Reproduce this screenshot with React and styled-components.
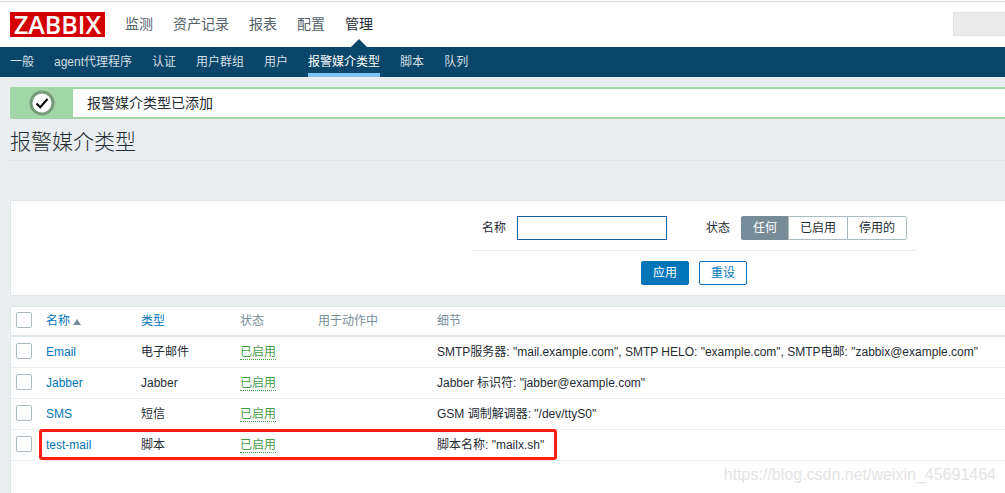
import React from "react";
import styled, { createGlobalStyle } from "styled-components";

const GlobalStyle = createGlobalStyle`
  * { box-sizing: border-box; }
  body {
    margin: 0;
    background: #ebeef0;
    color: #1f2c33;
    font: 12px/16px "Liberation Sans", "Noto Sans CJK SC", sans-serif;
    overflow-x: hidden;
  }
  input, button { font: inherit; }
  a { text-decoration: none; }
`;

const Page = styled.div`
  display: flex;
  flex-direction: column;
  min-height: 100vh;
  position: relative;
`;

const TopBar = styled.header`
  display: flex;
  align-items: center;
  height: 47px;
  padding-left: 10px;
  border-top: 1px solid #fff;
  background: #fff;
  box-shadow: inset 0 1px 0 #dcdcdc;
`;

const Logo = styled.a`
  width: 95px;
  height: 25px;
  background: #d40000;
  color: #fff;
  font-family: "Open Sans", "Liberation Sans", sans-serif;
  font-size: 25px;
  font-weight: 600;
  line-height: 25px;
  text-align: center;
`;

const MainNav = styled.nav`
  display: flex;
  align-self: stretch;
  gap: 20px;
  padding-left: 20px;
`;

const MainLink = styled.a`
  position: relative;
  font-size: 14px;
  line-height: 46px;
  color: ${(p) => (p.$active ? "#1f2c33" : "#52616a")};

  &::after {
    content: "";
    display: ${(p) => (p.$active ? "block" : "none")};
    position: absolute;
    bottom: 0;
    left: 50%;
    margin-left: -8px;
    border: 8px solid transparent;
    border-top: 0;
    border-bottom-color: #0a466a;
  }
`;

const Search = styled.input`
  width: 52px;
  height: 24px;
  margin-left: auto;
  border: 1px solid #e2e2e2;
  border-right: 0;
  background: #ebebeb;
`;

const SubNav = styled.nav`
  display: flex;
  gap: 20px;
  height: 30px;
  padding: 0 10px;
  background: #0a466a;
`;

const SubLink = styled.a`
  height: 30px;
  line-height: 30px;
  color: ${(p) => (p.$active ? "#fff" : "#d3dfe6")};
  box-shadow: ${(p) => (p.$active ? "inset 0 -4px 0 #7dc5f5" : "none")};
`;

const Content = styled.main`
  display: flex;
  flex-direction: column;
  flex: 1;
  padding: 10px 0 0 10px;
`;

const Message = styled.output`
  display: flex;
  height: 32px;
  border: 2px solid #a3d6a7;
  border-width: 2px 0;
  border-radius: 2px 0 0 2px;
  background: #fff;
  font-size: 14px;
  line-height: 28px;
`;

const MessageMark = styled.span`
  display: flex;
  align-items: center;
  justify-content: center;
  width: 63px;
  margin-right: 14px;
  background: #a3d6a7;
`;

const Title = styled.h1`
  margin: 0;
  height: 42px;
  border-bottom: 1px solid #dfe4e7;
  font-size: 21px;
  font-weight: 300;
  line-height: 46px;
`;

const FilterPanel = styled.section`
  display: flex;
  justify-content: flex-end;
  margin-top: 39px;
  padding: 15px 89px 10px 10px;
  border: 1px solid #dfe4e7;
  border-right: 0;
  background: #fff;
`;

const FilterFields = styled.div`
  display: flex;
  gap: 39px;
  padding: 0 9px 10px 10px;
  border-bottom: 1px solid #ebebeb;
`;

const Field = styled.div`
  display: flex;
  align-items: center;
  gap: 11px;
`;

const TextInput = styled.input`
  width: 150px;
  height: 24px;
  border: 1px solid #0a5f96;
  background: #fff;
`;

const Segments = styled.div`
  display: flex;
  height: 24px;
`;

const Segment = styled.label`
  padding: 0 11px;
  margin-left: -1px;
  border: 1px solid #acbbc2;
  background: #fff;
  line-height: 22px;

  &:first-child { margin-left: 0; border-radius: 2px 0 0 2px; }
  &:last-child { border-radius: 0 2px 2px 0; }
  &:has(input:checked) {
    background: #768d99;
    border-color: #768d99;
    color: #fff;
  }
  input {
    position: absolute;
    appearance: none;
    margin: 0;
    width: 0;
    height: 0;
  }
`;

const Actions = styled.div`
  display: flex;
  justify-content: center;
  gap: 10px;
  padding-top: 10px;
`;

const Button = styled.button`
  width: 48px;
  height: 24px;
  padding: 0;
  border: 1px solid #0275b8;
  border-radius: 2px;
  background: ${(p) => (p.$primary ? "#0275b8" : "#fff")};
  color: ${(p) => (p.$primary ? "#fff" : "#0275b8")};
  line-height: 22px;
`;

const TablePanel = styled.section`
  flex: 1;
  margin-top: 10px;
  border: 1px solid #dfe4e7;
  border-width: 1px 0 0 1px;
  background: #fff;
`;

const Table = styled.table`
  width: 100%;
  table-layout: fixed;
  border-collapse: separate;
  border-spacing: 0;
`;

const Col = styled.col`
  width: ${(p) => p.$w || "auto"};
`;

const Head = styled.th`
  height: 30px;
  padding: 0 5px;
  border-bottom: 2px solid #dfe4e7;
  color: #768d99;
  font-weight: 400;
  text-align: left;
`;

const Cell = styled.td`
  position: relative;
  height: 31px;
  padding: 0 5px;
  border-bottom: 1px solid #ebeef0;
  white-space: nowrap;
`;

const Link = styled.a`
  color: #0275b8;
`;

const SortArrow = styled.span`
  display: inline-block;
  margin-left: 3px;
  border: 4px solid transparent;
  border-top: 0;
  border-bottom: 6px solid #768d99;
`;

const Status = styled.button`
  display: block;
  height: 15px;
  padding: 0;
  border: 0;
  border-bottom: 1px dotted #429e47;
  background: none;
  color: #429e47;
  line-height: 14px;
`;

const Check = styled.input`
  appearance: none;
  display: block;
  width: 16px;
  height: 16px;
  margin: 0 0 2px;
  border: 1px solid #acbbc2;
  border-radius: 2px;
  background: #fff;
`;

const Highlight = styled.span`
  position: absolute;
  top: -1px;
  left: -2px;
  width: 518px;
  height: 31px;
  border: 3px solid #ff1c12;
  border-radius: 3px;
  pointer-events: none;
  z-index: 1;
`;

const Watermark = styled.span`
  position: absolute;
  right: 9px;
  bottom: 8px;
  color: #e4e4e4;
  font-size: 16px;
  line-height: 20px;
`;

const mainItems = ["监测", "资产记录", "报表", "配置", "管理"];
const subItems = ["一般", "agent代理程序", "认证", "用户群组", "用户", "报警媒介类型", "脚本", "队列"];
const rows = [
  { name: "Email", type: "电子邮件", detail: 'SMTP服务器: "mail.example.com", SMTP HELO: "example.com", SMTP电邮: "zabbix@example.com"' },
  { name: "Jabber", type: "Jabber", detail: 'Jabber 标识符: "jabber@example.com"' },
  { name: "SMS", type: "短信", detail: 'GSM 调制解调器: "/dev/ttyS0"' },
  { name: "test-mail", type: "脚本", detail: '脚本名称: "mailx.sh"', marked: true },
];

export default function App() {
  return (
    <Page>
      <GlobalStyle />
      <TopBar>
        <Logo href="#">ZABBIX</Logo>
        <MainNav>
          {mainItems.map((t) => (
            <MainLink key={t} href="#" $active={t === "管理"}>{t}</MainLink>
          ))}
        </MainNav>
        <Search type="search" aria-label="搜索" />
      </TopBar>
      <SubNav>
        {subItems.map((t) => (
          <SubLink key={t} href="#" $active={t === "报警媒介类型"}>{t}</SubLink>
        ))}
      </SubNav>
      <Content>
        <Message>
          <MessageMark>
            <svg width="26" height="26" viewBox="0 0 26 26" aria-hidden="true">
              <circle cx="13" cy="13" r="11" fill="#fff" stroke="#769b78" strokeWidth="3" />
              <path d="M7.5 13.5l3.7 3.7L18.5 9" fill="none" stroke="#000" strokeWidth="2" />
            </svg>
          </MessageMark>
          报警媒介类型已添加
        </Message>
        <Title>报警媒介类型</Title>
        <FilterPanel>
          <form onSubmit={(e) => e.preventDefault()}>
            <FilterFields>
              <Field>
                <label htmlFor="filter-name">名称</label>
                <TextInput id="filter-name" type="text" />
              </Field>
              <Field role="radiogroup" aria-labelledby="filter-status">
                <span id="filter-status">状态</span>
                <Segments>
                  {["任何", "已启用", "停用的"].map((t, i) => (
                    <Segment key={t}>
                      <input type="radio" name="status" defaultChecked={i === 0} />
                      {t}
                    </Segment>
                  ))}
                </Segments>
              </Field>
            </FilterFields>
            <Actions>
              <Button type="submit" $primary>应用</Button>
              <Button type="reset">重设</Button>
            </Actions>
          </form>
        </FilterPanel>
        <TablePanel>
          <Table>
            <colgroup>
              <Col $w="30px" />
              <Col $w="95px" />
              <Col $w="99px" />
              <Col $w="78px" />
              <Col $w="119px" />
              <Col />
            </colgroup>
            <thead>
              <tr>
                <Head><Check type="checkbox" aria-label="全选" /></Head>
                <Head><Link href="#">名称<SortArrow /></Link></Head>
                <Head><Link href="#">类型</Link></Head>
                <Head>状态</Head>
                <Head>用于动作中</Head>
                <Head>细节</Head>
              </tr>
            </thead>
            <tbody>
              {rows.map((r) => (
                <tr key={r.name}>
                  <Cell><Check type="checkbox" aria-label={r.name} /></Cell>
                  <Cell>
                    <Link href="#">{r.name}</Link>
                    {r.marked && <Highlight />}
                  </Cell>
                  <Cell>{r.type}</Cell>
                  <Cell><Status type="button">已启用</Status></Cell>
                  <Cell />
                  <Cell>{r.detail}</Cell>
                </tr>
              ))}
            </tbody>
          </Table>
        </TablePanel>
      </Content>
      <Watermark>https://blog.csdn.net/weixin_45691464</Watermark>
    </Page>
  );
}
